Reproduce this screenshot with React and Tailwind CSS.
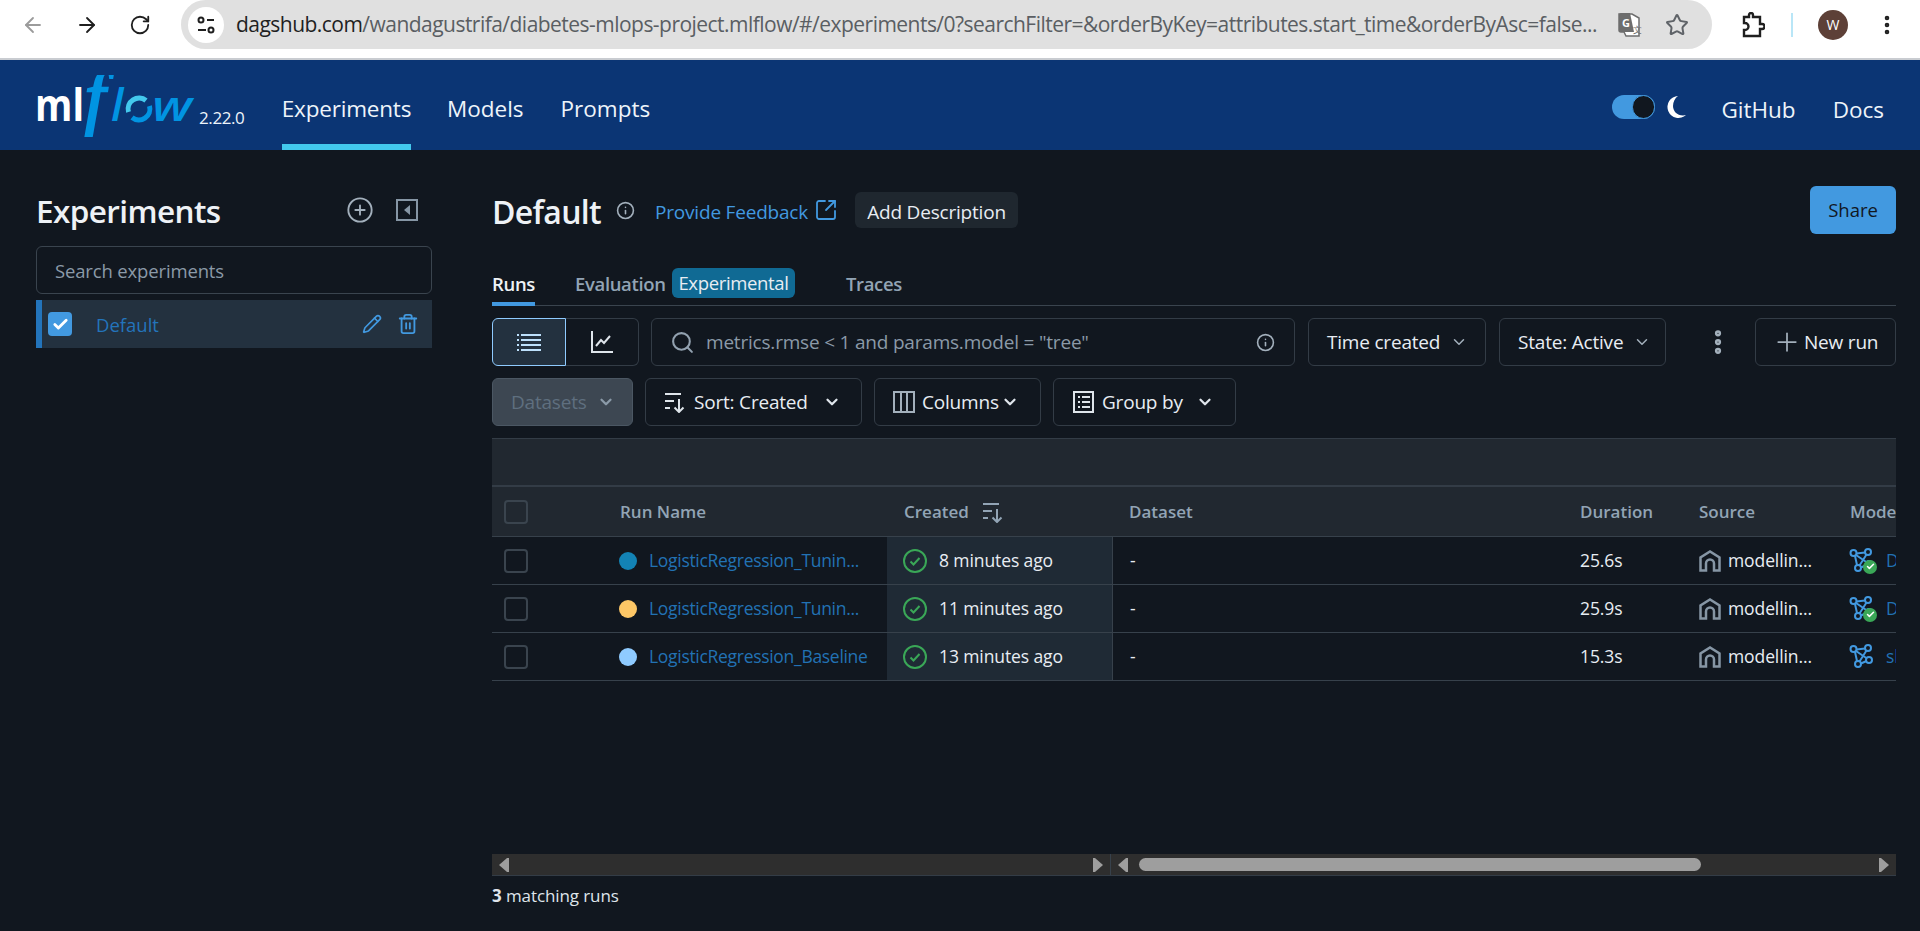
import React from "react";
import {
  ArrowLeft,
  ArrowRight,
  RotateCw,
  Star,
  EllipsisVertical,
  CirclePlus,
  Pencil,
  Trash2,
  Info,
  SquareArrowOutUpRight,
  Search,
  ChevronDown,
  Plus,
  Check,
} from "lucide-react";

const font = { fontFamily: '"Open Sans", "Noto Sans", sans-serif' };

const runs = [
  { name: "LogisticRegression_Tunin...", dot: "bg-[#1383b5]", time: "8 minutes ago", duration: "25.6s", model: "D", badge: true },
  { name: "LogisticRegression_Tunin...", dot: "bg-[#fdc766]", time: "11 minutes ago", duration: "25.9s", model: "D", badge: true },
  { name: "LogisticRegression_Baseline", dot: "bg-[#8fcbff]", time: "13 minutes ago", duration: "15.3s", model: "sl", badge: false },
];

const ModelIcon = ({ badge }) => (
  <span className="relative w-[28px] h-[26px] shrink-0">
    <svg width="24" height="24" viewBox="0 0 24 24" fill="none" stroke="#4299e0" strokeWidth="2">
      <circle cx="4.5" cy="5" r="3" />
      <circle cx="19" cy="4" r="3" />
      <circle cx="9" cy="20" r="3" />
      <circle cx="20" cy="16" r="3" />
      <path d="M7.5 5.5 L16 4.5 M6 8 L8 17 M17.5 6.5 L10.5 17.5 M7 7 L18 14.5 M12 19.5 L17.5 17" />
    </svg>
    {badge && (
      <span className="absolute right-0 bottom-0 w-[14px] h-[14px] rounded-full bg-[#3aa757] flex items-center justify-center">
        <Check size={9} strokeWidth={4} className="text-white" />
      </span>
    )}
  </span>
);

const HomeIcon = () => (
  <svg width="22" height="22" viewBox="0 0 22 22" fill="none" stroke="#8696a5" strokeWidth="2.5" className="shrink-0">
    <path d="M1.5 20.500V7.500L11 1.500l9.500 6v13h-5.500v-7a4 4 0 0 0-8 0v7z" />
  </svg>
);

const SortIcon = ({ color = "#dfe5eb" }) => (
  <svg width="22" height="22" viewBox="0 0 22 22" fill="none" stroke={color} strokeWidth="2">
    <path d="M1 3h16M1 10h9M1 17h5M15 8v13M10.5 16.5 15 21l4.5-4.5" />
  </svg>
);

const ToolButton = ({ className, children }) => (
  <div className={`h-[48px] shrink-0 border border-[#333c46] rounded-[6px] flex items-center text-[#e8edf3] ${className}`}>
    {children}
  </div>
);

const ScrollArrow = ({ dir, color = "#9e9e9e" }) => (
  <svg width="12" height="14" viewBox="0 0 12 14" className="shrink-0">
    <path d={dir === "left" ? "M11 0v14H9L1 7l8-7z" : "M1 0v14h2l8-7-8-7z"} fill={color} />
  </svg>
);

const App = () => {
  return (
    <div className="w-[1920px] h-[931px] overflow-hidden bg-[#11171f] flex flex-col" style={font}>
      {/* Browser bar */}
      <div className="h-[60px] shrink-0 bg-white border-b-2 border-[#c9ccd1] flex items-start relative">
        <div className="w-[181px] h-[49px] flex items-center shrink-0 pl-[21px] gap-[30px]">
          <ArrowLeft size={24} strokeWidth={1.8} className="text-[#9b9b9b]" />
          <ArrowRight size={24} strokeWidth={1.8} className="text-[#1f1f1f]" />
          <RotateCw size={22} strokeWidth={2} className="text-[#1f1f1f]" />
        </div>
        <div className="w-[1531px] h-[49px] rounded-full bg-[#e0e0e0] flex items-center pl-[7px] shrink-0">
          <div className="w-[36px] h-[36px] rounded-full bg-white flex items-center justify-center shrink-0">
            <svg width="20" height="20" viewBox="0 0 20 20" fill="none" stroke="#1f1f1f" strokeWidth="2">
              <circle cx="5" cy="5" r="2.5" />
              <circle cx="15" cy="15" r="2.5" />
              <path d="M11 5h7M2 15h8" />
            </svg>
          </div>
          <div className="ml-[12px] w-[1364px] whitespace-nowrap overflow-hidden text-[21px] tracking-[-0.53px] text-[#5a5e63]">
            <span className="text-[#1f1f1f]">dagshub.com</span>/wandagustrifa/diabetes-mlops-project.mlflow/#/experiments/0?searchFilter=&orderByKey=attributes.start_time&orderByAsc=false...
          </div>
          <svg width="26" height="26" viewBox="0 0 26 26" className="ml-[18px] shrink-0">
            <path d="M1 2h13l7 4v18H8L6 20H3a2 2 0 0 1-2-2z" fill="#fff" stroke="#6d6d6d" strokeWidth="1.5" />
            <path d="M1 3a2 2 0 0 1 2-2h9l4 19H3a2 2 0 0 1-2-2z" fill="#6d6d6d" />
            <text x="4" y="15" fontSize="11" fontWeight="700" fill="#fff">G</text>
            <text x="15" y="21" fontSize="9" fill="#6d6d6d">文</text>
          </svg>
          <Star size={24} strokeWidth={2} className="ml-[21px] text-[#5f6368] shrink-0" />
        </div>
        <div className="flex-1 h-[49px] flex items-center">
          <svg width="24" height="26" viewBox="0 0 24 26" fill="none" stroke="#1f1f1f" strokeWidth="2.4" className="ml-[29px]">
            <path d="M3 5h5V3a2 2 0 0 1 4 0v0h0v2h7v7h2a2.500 2.500 0 0 1 0 5h-2v7H3v-6h1a3.500 3.500 0 0 0 0-7H3z" />
          </svg>
          <div className="w-[2px] h-[24px] bg-[#b9e6f7] ml-[26px]" />
          <div className="w-[30px] h-[30px] rounded-full bg-[#5d4037] text-white text-[14px] flex items-center justify-center ml-[25px]">W</div>
          <EllipsisVertical size={24} strokeWidth={2.6} className="ml-[27px] text-[#1f1f1f]" />
        </div>
      </div>

      {/* MLflow header */}
      <div className="h-[90px] shrink-0 bg-[#0b3574] flex items-stretch text-[22.500px] text-[#eef4fa]">
        <div className="w-[282px] shrink-0 relative flex items-end">
          <svg width="170" height="62" viewBox="0 0 170 62" className="ml-[34px] mb-[13px]">
            <text x="1" y="46" fontSize="45" fontWeight="700" fill="#fff" textLength="49" lengthAdjust="spacingAndGlyphs">ml</text>
            <text x="51" y="46" fontSize="72" fontStyle="italic" fill="#0194e2" stroke="#0194e2" strokeWidth="2.5" fontFamily="Liberation Serif">f</text>
            <text x="77" y="46" fontSize="45" fontStyle="italic" fontWeight="600" fill="#0194e2">l</text>
            <path d="M94.500 37a11 11 0 0 1 17.500-11.500" fill="none" stroke="#43c9ed" strokeWidth="5" />
            <path d="M115.500 31a11 11 0 0 1-17.500 11.500" fill="none" stroke="#0194e2" strokeWidth="5" />
            <text x="118" y="46" fontSize="42" fontStyle="italic" fontWeight="600" fill="#0194e2" textLength="40" lengthAdjust="spacingAndGlyphs">w</text>
          </svg>
          <span className="absolute left-[199px] top-[45px] text-[17px] tracking-[-0.4px] text-[#eef4fa]">2.22.0</span>
        </div>
        <div className="w-[129px] shrink-0 border-b-[6px] border-[#43c9ed] flex items-center justify-center pt-[14px] whitespace-nowrap tracking-[-0.2px]">Experiments</div>
        <div className="ml-[36px] flex items-center whitespace-nowrap pt-[8px]">Models</div>
        <div className="ml-[37px] flex items-center whitespace-nowrap pt-[8px]">Prompts</div>
        <div className="flex-1" />
        <div className="flex items-center pt-[4px]">
          <div className="w-[43px] h-[24px] rounded-full bg-[#4299e0] flex items-center justify-end">
            <div className="w-[23px] h-[24px] rounded-full bg-[#11171f] border border-[#4299e0]" />
          </div>
          <svg width="20" height="22" viewBox="0 0 20 22" fill="#fff" className="ml-[11px]">
            <path d="M12 0a11 11 0 1 0 8 19 10 10 0 0 1-3 .5C11 19.500 7 15 7 10c0-4 2-8 5-10z" />
          </svg>
          <span className="ml-[35px] pt-[6px]">GitHub</span>
          <span className="ml-[37px] mr-[36px] pt-[6px]">Docs</span>
        </div>
      </div>

      {/* Page body */}
      <div className="flex-1 flex items-start min-h-0">
        {/* Sidebar */}
        <div className="ml-[36px] w-[396px] shrink-0 pt-[36px]">
          <div className="h-[48px] flex items-center">
            <span className="text-[31.500px] font-semibold text-[#eef2f6] tracking-[-0.6px] pt-[2px]">Experiments</span>
            <CirclePlus size={28} strokeWidth={1.6} className="ml-auto text-[#a3b0bc]" />
            <svg width="22" height="22" viewBox="0 0 22 22" className="ml-[22px] mr-[14px]">
              <rect x="1" y="1" width="20" height="20" fill="none" stroke="#8696a5" strokeWidth="2" />
              <path d="M14 6v10l-6-5z" fill="#8696a5" />
            </svg>
          </div>
          <div className="mt-[12px] h-[48px] border border-[#3a444e] rounded-[6px] flex items-center pl-[18px] pt-[2px] text-[18.500px] text-[#8b9aa8] tracking-[-0.15px]">
            Search experiments
          </div>
          <div className="mt-[6px] h-[48px] bg-[#23313f] border-l-[6px] border-[#2374bb] flex items-center pl-[6px] pr-[14px]">
            <div className="w-[24px] h-[24px] rounded-[4px] bg-[#4299e0] flex items-center justify-center">
              <Check size={17} strokeWidth={4} className="text-white" />
            </div>
            <span className="ml-[24px] pt-[2px] text-[18.500px] text-[#2374bb]">Default</span>
            <Pencil size={20} strokeWidth={2} className="ml-auto text-[#4299e0]" />
            <Trash2 size={22} strokeWidth={2} className="ml-[15px] -mr-[1px] text-[#4299e0]" />
          </div>
        </div>

        {/* Main */}
        <div className="ml-[60px] w-[1404px] shrink-0 pt-[36px]">
          <div className="h-[48px] flex items-center">
            <span className="text-[32px] font-semibold text-[#eef2f6] tracking-[-0.7px] pt-[4px]">Default</span>
            <Info size={19} strokeWidth={2} className="ml-[15px] text-[#a3b0bc]" />
            <span className="ml-[20px] pt-[5px] text-[19px] text-[#4299e0] tracking-[-0.2px] whitespace-nowrap">Provide Feedback</span>
            <SquareArrowOutUpRight size={24} strokeWidth={1.8} className="ml-[6px] text-[#4299e0]" />
            <div className="ml-[17px] w-[163px] h-[36px] rounded-[6px] bg-[#1f272f] flex items-center justify-center pt-[4px] text-[19px] text-[#e8edf3] tracking-[-0.2px] whitespace-nowrap">
              Add Description
            </div>
            <div className="ml-auto w-[86px] h-[48px] rounded-[6px] bg-[#4299e0] flex items-center justify-center text-[18.500px] text-[#11171f]">Share</div>
          </div>

          {/* Tabs */}
          <div className="mt-[34px] h-[38px] border-b border-[#3a444e] flex text-[18.500px] whitespace-nowrap tracking-[-0.35px]">
            <div className="w-[43px] h-[38px] border-b-[4px] border-[#4299e0] text-[#eef2f6] font-semibold flex justify-center pt-[2px]">Runs</div>
            <div className="ml-[40px] w-[90px] text-[#92a4b5] font-semibold pt-[2px]">Evaluation</div>
            <div className="ml-[7px] w-[123px] h-[30px] rounded-[6px] bg-[#106a94] text-[#e8edf3] flex items-center justify-center">Experimental</div>
            <div className="ml-[51px] text-[#92a4b5] font-semibold pt-[2px]">Traces</div>
          </div>

          {/* Toolbar */}
          <div className="mt-[12px] flex items-center text-[19px] tracking-[-0.2px] whitespace-nowrap">
            <div className="w-[74px] h-[48px] rounded-l-[6px] border border-[#8fcbff] bg-[#23313f] flex items-center justify-center shrink-0">
              <svg width="26" height="22" viewBox="0 0 26 22" fill="none" stroke="#bde0fb" strokeWidth="2">
                <path d="M5 4h20M5 9h20M5 14h20M5 19h20M1 4h2M1 9h2M1 14h2M1 19h2" />
              </svg>
            </div>
            <div className="w-[73px] h-[48px] rounded-r-[6px] border border-l-0 border-[#333c46] flex items-center justify-center shrink-0">
              <svg width="24" height="24" viewBox="0 0 24 24" fill="none" stroke="#dfe5eb" strokeWidth="2">
                <path d="M2 1v21h21M6 16l5-6 3 3 6-7" />
              </svg>
            </div>
            <ToolButton className="ml-[12px] w-[644px] pl-[18px] pr-[19px]">
              <Search size={25} strokeWidth={2} className="text-[#92a1af] shrink-0" />
              <span className="ml-[11px] text-[#8b9aa8]">metrics.rmse &lt; 1 and params.model = "tree"</span>
              <Info size={19} strokeWidth={2} className="ml-auto text-[#a3b0bc]" />
            </ToolButton>
            <ToolButton className="ml-[13px] w-[178px] pl-[18px]">
              Time created
              <ChevronDown size={18} strokeWidth={2} className="ml-auto mr-[17px] text-[#a3b0bc]" />
            </ToolButton>
            <ToolButton className="ml-[13px] w-[167px] pl-[18px]">
              State: Active
              <ChevronDown size={18} strokeWidth={2} className="ml-auto mr-[14px] text-[#a3b0bc]" />
            </ToolButton>
            <EllipsisVertical size={30} strokeWidth={3} className="ml-[37px] text-[#a3b0bc] shrink-0" />
            <ToolButton className="ml-[22px] w-[141px] pl-[16px]">
              <Plus size={30} strokeWidth={1.4} className="text-[#a3b0bc] shrink-0" />
              <span className="ml-[2px]">New run</span>
            </ToolButton>
          </div>
          <div className="mt-[12px] flex items-center text-[19px] tracking-[-0.2px] whitespace-nowrap">
            <div className="w-[141px] h-[48px] rounded-[6px] border border-[#4b5763] bg-[#3d4752] flex items-center pl-[18px] text-[#5f6f7f]">
              Datasets
              <ChevronDown size={18} strokeWidth={3} className="ml-auto mr-[17px] text-[#8b9aa8]" />
            </div>
            <ToolButton className="ml-[12px] w-[217px] pl-[18px]">
              <SortIcon />
              <span className="ml-[8px]">Sort: Created</span>
              <ChevronDown size={18} strokeWidth={3} className="ml-auto mr-[20px] text-[#dfe5eb]" />
            </ToolButton>
            <ToolButton className="ml-[12px] w-[167px] pl-[18px]">
              <svg width="22" height="22" viewBox="0 0 22 22" fill="none" stroke="#a3b0bc" strokeWidth="2" className="shrink-0">
                <rect x="1" y="1" width="20" height="20" />
                <path d="M8 1v20M14 1v20" />
              </svg>
              <span className="ml-[7px]">Columns</span>
              <ChevronDown size={18} strokeWidth={3} className="ml-[2px] text-[#dfe5eb]" />
            </ToolButton>
            <ToolButton className="ml-[12px] w-[183px] pl-[19px]">
              <svg width="21" height="22" viewBox="0 0 21 22" fill="none" stroke="#dfe5eb" strokeWidth="2" className="shrink-0">
                <rect x="1" y="1" width="19" height="20" />
                <path d="M5 6h2M9 6h8M5 11h2M9 11h8M5 16h2M9 16h8" />
              </svg>
              <span className="ml-[8px]">Group by</span>
              <ChevronDown size={18} strokeWidth={3} className="ml-auto mr-[21px] text-[#dfe5eb]" />
            </ToolButton>
          </div>

          {/* Runs table */}
          <div className="mt-[12px] h-[49px] bg-[#212830] border-t border-b-2 border-[#333c46]" />
          <div className="h-[50px] bg-[#212830] border-b border-[#37414b] flex items-center text-[17px] font-semibold text-[#92a4b5] whitespace-nowrap overflow-hidden">
            <div className="w-[128px] shrink-0 pl-[12px]">
              <div className="w-[24px] h-[24px] rounded-[4px] border-2 border-[#3a444e]" />
            </div>
            <div className="w-[284px] shrink-0">Run Name</div>
            <div className="w-[225px] shrink-0 flex items-center">
              Created
              <span className="ml-[13px]"><SortIcon color="#92a4b5" /></span>
            </div>
            <div className="w-[451px] shrink-0">Dataset</div>
            <div className="w-[119px] shrink-0">Duration</div>
            <div className="w-[151px] shrink-0">Source</div>
            <div className="w-[46px] shrink-0 overflow-hidden">Models</div>
          </div>
          {runs.map((run, i) => (
            <div key={i} className="h-[48px] border-b border-[#37414b] flex items-stretch text-[17.500px] text-[#e8edf3] whitespace-nowrap overflow-hidden tracking-[-0.1px]">
              <div className="w-[127px] shrink-0 pl-[12px] flex items-center">
                <div className="w-[24px] h-[24px] rounded-[4px] border-2 border-[#3a444e]" />
              </div>
              <div className="w-[268px] shrink-0 flex items-center">
                <span className={`w-[18px] h-[18px] rounded-full ${run.dot} shrink-0`} />
                <span className="ml-[12px] text-[#2272b4] tracking-[-0.3px]">{run.name}</span>
              </div>
              <div className="w-[226px] shrink-0 bg-[#1f2a35] border-r border-[#37414b] flex items-center pl-[16px]">
                <svg width="24" height="24" viewBox="0 0 24 24" fill="none" stroke="#3aa757" strokeWidth="2" className="shrink-0">
                  <circle cx="12" cy="12" r="11" />
                  <path d="M7.500 12.500l3 3 6-6.500" />
                </svg>
                <span className="ml-[12px]">{run.time}</span>
              </div>
              <div className="w-[467px] shrink-0 pl-[17px] flex items-center">-</div>
              <div className="w-[119px] shrink-0 flex items-center">{run.duration}</div>
              <div className="w-[150px] shrink-0 flex items-center">
                <HomeIcon />
                <span className="ml-[7px]">modellin...</span>
              </div>
              <div className="w-[47px] shrink-0 flex items-center overflow-hidden">
                <ModelIcon badge={run.badge} />
                <span className="ml-[9px] text-[#2272b4]">{run.model}</span>
              </div>
            </div>
          ))}

          {/* Scrollbars */}
          <div className="mt-[173px] h-[22px] bg-[#2e2e2e] border-b border-[#333c46] flex items-center">
            <div className="w-[619px] shrink-0 h-full border-r border-[#37414b] flex items-center justify-between px-[6px]">
              <ScrollArrow dir="left" />
              <ScrollArrow dir="right" />
            </div>
            <div className="flex-1 h-full flex items-center px-[6px]">
              <ScrollArrow dir="left" />
              <div className="ml-[10px] w-[562px] h-[13px] rounded-full bg-[#9e9e9e]" />
              <div className="flex-1" />
              <ScrollArrow dir="right" />
            </div>
          </div>
          <div className="mt-[7px] text-[17px] text-[#dfe5eb] tracking-[-0.1px]">
            <span className="font-bold">3</span> matching runs
          </div>
        </div>
      </div>
    </div>
  );
};

export default App;
